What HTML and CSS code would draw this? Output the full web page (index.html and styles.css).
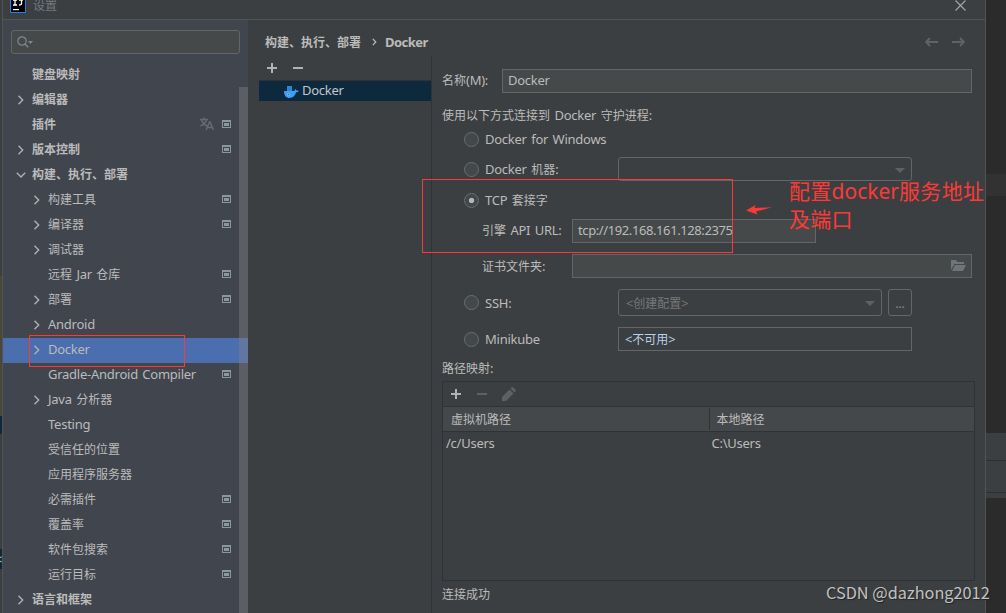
FILE: index.html
```html
<!DOCTYPE html>
<html lang="zh-CN">
<head>
<meta charset="utf-8">
<title>设置</title>
<link rel="stylesheet" href="styles.css">
</head>
<body>
<svg class="defs" width="0" height="0">
  <symbol id="right" viewBox="0 0 10 10"><path d="M2.5 .8 6.7 5 2.5 9.2" fill="none" stroke="#aeb0b3" stroke-width="1.4"/></symbol>
  <symbol id="down" viewBox="0 0 10 10"><path d="M.8 2.8 5 7 9.2 2.8" fill="none" stroke="#aeb0b3" stroke-width="1.4"/></symbol>
  <symbol id="proj" viewBox="0 0 9 8"><path d="M0 0h9v8H0zM1 2v5h7V2z" fill="#8b979f" fill-rule="evenodd"/><path d="M2 3h5v3H2z" fill="#8b979f"/></symbol>
  <symbol id="plus" viewBox="0 0 10 10"><path d="M4 0h2v4h4v2H6v4H4V6H0V4h4z" fill="currentColor"/></symbol>
  <symbol id="minus" viewBox="0 0 10 10"><path d="M0 4h10v2H0z" fill="currentColor"/></symbol>
</svg>
<div class="screen">
  <div class="behind-left"><i class="olive"></i><i class="sel"></i><i class="sel two">&lt;</i></div>
  <div class="window">
    <header class="titlebar">
      <svg class="logo" width="16" height="16" viewBox="0 0 16 16"><path d="M.5 .5h15v15H.5z" fill="#000" stroke="#1d7ff2"/><path d="M3 3h4M5 3v5M3 8h4M9 3h4M11.500 3v3.500q0 1.500-2.500 1.500" fill="none" stroke="#fff" stroke-width="1.300"/><path d="M3 12h6v1.200H3z" fill="#fff"/></svg>
      <span class="zh">设置</span>
      <svg class="close" width="11" height="11" viewBox="0 0 11 11"><path d="M.5.5l10 10M10.500.5l-10 10" stroke="#a4a6a7" stroke-width="1.100"/></svg>
    </header>
    <div class="body">
      <aside class="sidebar">
        <div class="search"><svg width="17" height="12" viewBox="0 0 17 12"><circle cx="5" cy="5" r="4.200" fill="none" stroke="#80878a" stroke-width="1.200"/><path d="M8 8l3.300 3.300" stroke="#80878a" stroke-width="1.400"/><path d="M11 5h5l-2.500 3z" fill="#80878a"/></svg></div>
        <ul class="tree">
          <li class="top"><span class="zh">键盘映射</span></li>
          <li class="top"><svg class="chev"><use href="#right"/></svg><span class="zh">编辑器</span></li>
          <li class="top"><span class="zh">插件</span><svg class="lang" width="14" height="14" viewBox="0 0 14 14"><path d="M0 2.500h8M4 .5v2M1.500 2.500C2.500 6 5 8 7 9M6.500 2.500C5.500 6 3 8 .5 9M6.200 13l3.300-8h.6l3.300 8M7.500 10.500h4.600" fill="none" stroke="#646b74" stroke-width="1.500"/></svg><svg class="badge"><use href="#proj"/></svg></li>
          <li class="top"><svg class="chev"><use href="#right"/></svg><span class="zh">版本控制</span><svg class="badge"><use href="#proj"/></svg></li>
          <li class="top"><svg class="chev"><use href="#down"/></svg><span class="zh">构建、执行、部署</span></li>
          <li><svg class="chev"><use href="#right"/></svg><span class="zh">构建工具</span><svg class="badge"><use href="#proj"/></svg></li>
          <li><svg class="chev"><use href="#right"/></svg><span class="zh">编译器</span><svg class="badge"><use href="#proj"/></svg></li>
          <li><svg class="chev"><use href="#right"/></svg><span class="zh">调试器</span></li>
          <li><span><b class="zh">远程</b> Jar <b class="zh">仓库</b></span><svg class="badge"><use href="#proj"/></svg></li>
          <li><svg class="chev"><use href="#right"/></svg><span class="zh">部署</span><svg class="badge"><use href="#proj"/></svg></li>
          <li><svg class="chev"><use href="#right"/></svg><span>Android</span></li>
          <li class="active"><svg class="chev"><use href="#right"/></svg><span>Docker</span></li>
          <li><span>Gradle-Android Compiler</span><svg class="badge"><use href="#proj"/></svg></li>
          <li><svg class="chev"><use href="#right"/></svg><span>Java <b class="zh">分析器</b></span></li>
          <li><span>Testing</span></li>
          <li><span class="zh">受信任的位置</span></li>
          <li><span class="zh">应用程序服务器</span></li>
          <li><span class="zh">必需插件</span><svg class="badge"><use href="#proj"/></svg></li>
          <li><span class="zh">覆盖率</span><svg class="badge"><use href="#proj"/></svg></li>
          <li><span class="zh">软件包搜索</span><svg class="badge"><use href="#proj"/></svg></li>
          <li><span class="zh">运行目标</span><svg class="badge"><use href="#proj"/></svg></li>
          <li class="top"><svg class="chev"><use href="#right"/></svg><span class="zh">语言和框架</span></li>
        </ul>
        <div class="scrollbar"></div>
      </aside>
      <main class="main">
        <div class="crumbs">
          <span class="zh">构建、执行、部署</span>
          <svg width="5" height="8" viewBox="0 0 5 8"><path d="M.8.8 3.800 4 .8 7.200" fill="none" stroke="#bbb" stroke-width="1.200"/></svg>
          <span class="current">Docker</span>
          <svg class="nav" width="40" height="10" viewBox="0 0 40 10"><path d="M13 5H1M5 1 1 5l4 4M27 5h12M35 1l4 4-4 4" fill="none" stroke="#606364" stroke-width="1.900"/></svg>
        </div>
        <div class="split">
          <section class="servers">
            <div class="tools"><svg width="10" height="10"><use href="#plus"/></svg><svg width="10" height="10"><use href="#minus"/></svg></div>
            <div class="server"><svg width="15" height="12" viewBox="0 0 15 12"><path d="M3 0h5v5H3z" fill="#2b87cf"/><path d="M0 5h10.500c.5-.6.4-1.400.8-2 .8.400 1 1 1.100 1.600 1-.1 1.600 0 2.400.4-.5.900-1.500 1.200-2.700 1.300C11 10 9 12 5.500 12 2 12 0 9.500 0 5z" fill="#3b9ff3"/><circle cx="4.500" cy="8.500" r="1.200" fill="#2678b8" stroke="#9bd0fa" stroke-width=".7"/></svg><span>Docker</span></div>
          </section>
          <section class="form">
            <div class="row name"><label><b class="zh">名称</b>(M):</label><div class="field">Docker</div></div>
            <div class="row hint"><span><b class="zh">使用以下方式连接到</b> Docker <b class="zh">守护进程</b>:</span></div>
            <div class="row opt first"><i class="radio"></i><span>Docker for Windows</span></div>
            <div class="row opt machine"><i class="radio"></i><span class="lead">Docker <b class="zh">机器</b>:</span><div class="combo"><i class="caret"></i></div></div>
            <div class="row opt tcp"><i class="radio on"></i><span>TCP <b class="zh">套接字</b></span></div>
            <div class="row sub url"><label><b class="zh">引擎</b> API URL:</label><div class="field">tcp://192.168.161.128:2375</div></div>
            <div class="row sub cert"><label><b class="zh">证书文件夹</b>:</label><div class="field"><svg width="15" height="12" viewBox="0 0 15 12"><path d="M0 0h5l1.500 2H13v2H3.500L0 10z" fill="#6e7477"/><path d="M4 5h11l-3 6H1z" fill="#6e7477"/></svg></div></div>
            <div class="row opt ssh"><i class="radio"></i><span class="lead">SSH:</span><div class="combo">&lt;<b class="zh">创建配置</b>&gt;<i class="caret"></i></div><div class="more">...</div></div>
            <div class="row opt mini"><i class="radio"></i><span class="lead">Minikube</span><div class="field plain">&lt;<b class="zh">不可用</b>&gt;</div></div>
            <div class="row maplabel"><span><b class="zh">路径映射</b>:</span></div>
            <div class="table">
              <div class="tools"><svg width="10" height="10"><use href="#plus"/></svg><svg class="off" width="10" height="10"><use href="#minus"/></svg><svg class="off pen" width="14" height="14" viewBox="0 0 14 14"><path d="M0 14v-4l7.500-7.500 4 4L4 14zM8.500 1.500 9.700.3q.6-.5 1.200 0l2.800 2.800q.5.600 0 1.200l-1.200 1.200z" fill="currentColor"/></svg></div>
              <div class="thead"><div class="zh">虚拟机路径</div><div class="zh">本地路径</div></div>
              <div class="tr"><div>/c/Users</div><div>C:\Users</div></div>
            </div>
            <div class="row status"><span class="zh">连接成功</span></div>
          </section>
        </div>
      </main>
    </div>
  </div>
  <div class="behind-right"><i class="band"></i><i class="panel"></i></div>
  <div class="mark docker-item"></div>
  <div class="mark tcp-area"></div>
  <svg class="arrow" width="26" height="10" viewBox="0 0 26 10"><path d="M0 5.500 9.500 0 8.500 3 26 2.300 10 6.500l1.500 3z" fill="#fb3a37"/></svg>
  <div class="note"><b class="zh">配置</b>docker<b class="zh">服务地址</b><br><b class="zh">及端口</b></div>
  <div class="watermark">CSDN @dazhong2012</div>
</div>
</body>
</html>
```
FILE: styles.css
```css
* { box-sizing: border-box; }
body {
  margin: 0;
  background: #2b2b2b;
  color: #bbbbbb;
  font: 13px/20px "Noto Sans", "Noto Sans CJK SC", sans-serif;
  letter-spacing: -.25px;
  word-spacing: 1.3px;
}
i { font-style: normal; }
b { font-weight: inherit; }
svg { display: block; flex: none; }
.defs { position: absolute; }
.zh { font-size: 12px; font-family: "Noto Sans CJK SC", sans-serif; letter-spacing: 0; }
.screen { position: relative; display: flex; width: 1006px; height: 613px; overflow: hidden; white-space: nowrap; }

.behind-left { width: 2px; background: #3c3f41; display: flex; flex-direction: column; overflow: hidden; }
.behind-left .olive { margin-top: 276px; height: 140px; background: #4b4739; }
.behind-left .sel { height: 18px; background: #0d293e; }
.behind-left .two { margin-top: 115px; height: 20px; text-indent: -5px; }
.window { width: 984px; display: flex; flex-direction: column; background: #3c3f41; border-left: 1px solid #515455; border-right: 1px solid #515455; }
.behind-right { width: 20px; background: #2b2b2b; display: flex; flex-direction: column; }
.behind-right .band { margin-top: 174px; height: 22px; background: #323232; }
.behind-right .panel {
  margin-top: 237px; height: 65px;
  background: linear-gradient(#3c3f41 27px, #2d2f30 27px 28px, #3c3f41 28px 59px, #2d2f30 59px 60px, #3c3f41 60px);
}

.titlebar { height: 20px; flex: none; display: flex; border-bottom: 1px solid #515455; padding-left: 7px; color: #777a7c; }
.logo { margin-top: -3px; }
.titlebar .zh { line-height: 10px; margin-left: 7px; }
.close { margin: 0 19px 0 auto; }
.body { flex: 1; display: flex; min-height: 0; }

.sidebar { position: relative; width: 245px; background: #41454e; padding-top: 10px; overflow: hidden; }
.search { width: 229px; height: 24px; margin-left: 8px; border: 1px solid #646566; border-radius: 3px; background: #45494a; padding: 5px; }
.tree { list-style: none; margin: 9px 0 0; padding: 0; }
.tree li { height: 25px; padding: 0 17px 3px 45px; display: flex; align-items: center; }
.tree .top { padding-left: 29px; font-weight: 700; }
.tree .active { background: #4b6eaf; }
.chev { width: 10px; height: 10px; margin: 1px 6px 0 -16px; }
.badge { width: 9px; height: 8px; margin-left: auto; margin-top: -1px; }
.lang { margin-left: auto; margin-right: 8px; }
.lang + .badge { margin-left: 0; }
.scrollbar { position: absolute; right: 0; top: 67px; width: 9px; height: 540px; background: rgba(133, 133, 138, .4); }

.main { flex: 1; display: flex; flex-direction: column; min-width: 0; }
.crumbs { height: 36px; padding: 8px 20px 0 17px; display: flex; align-items: center; font-weight: 700; }
.crumbs svg { margin: 0 8px 0 11px; }
.crumbs .nav { margin: 0 0 0 auto; }
.current { letter-spacing: -.55px; }
.split { flex: 1; display: flex; min-height: 0; }
.servers { width: 184px; padding-left: 11px; border-right: 1px solid #303334; }
.tools { display: flex; gap: 16px; align-items: center; color: #b0b2b3; height: 24px; padding-left: 8px; }
.server { height: 21px; border-top: 1px solid #323232; background: #0d293e; display: flex; align-items: center; padding-left: 25px; gap: 3px; color: #c4c6c7; }
.server svg { margin-top: 2px; }
.server span { padding-bottom: 2px; }

.form { flex: 1; padding: 13px 0 0 10px; }
.row { display: flex; align-items: center; height: 24px; }
.field, .combo, .more { height: 100%; border: 1px solid #646566; background: #45494a; display: flex; align-items: center; padding-left: 5px; }
.field { padding-bottom: 1px; }
.name label { width: 60px; padding-bottom: 2px; }
.name .field, .url .field { padding-bottom: 3px; }
.name .field { width: 470px; }
.hint { margin-top: 12px; height: 20px; }
.opt { padding-left: 22px; }
.radio { width: 15px; height: 15px; border: 1px solid #6b6d6e; border-radius: 50%; background: #43494a; margin-right: 6px; flex: none; }
.radio.on { background: radial-gradient(circle, #b4b6b7 0 2.3px, #43494a 3px); }
.lead { width: 133px; }
.combo { width: 294px; border-radius: 3px; background: #3c3f41; color: #777; padding-left: 7px; }
.caret { margin: 2px 6px 0 auto; border: 5px solid transparent; border-top-color: #5e6162; border-bottom: 0; }
.first { margin-top: 2px; }
.first span { padding-bottom: 1px; }
.machine { margin-top: 6px; }
.tcp { margin-top: 7px; }
.sub { padding-left: 40px; }
.sub label { width: 90px; }
.url { margin-top: 7px; }
.url label { padding-bottom: 2px; }
.url .field { width: 244px; letter-spacing: -.4px; }
.cert { margin-top: 11px; }
.cert .field { width: 400px; justify-content: flex-end; padding-right: 5px; }
.ssh { margin-top: 11px; height: 27px; }
.ssh .combo { width: 264px; }
.more { width: 24px; margin-left: 6px; border-radius: 3px; background: #3c3f41; color: #888; padding: 0; justify-content: center; }
.mini { margin-top: 11px; }
.mini .lead { padding-bottom: 1px; }
.plain { width: 294px; background: #3c3f41; color: #bbd0e8; padding-left: 6px; }
.maplabel { margin-top: 7px; height: 20px; }
.table { width: 533px; height: 200px; margin-top: 3px; border: 1px solid #303233; }
.table .tools { border-bottom: 1px solid #303233; height: 25px; }
.off { color: #5e6061; }
.pen { margin-left: -1px; }
.thead { display: flex; height: 25px; align-items: center; background: #45484a; border-bottom: 1px solid #303233; }
.thead div { width: 266px; padding-left: 8px; }
.thead div + div { border-left: 1px solid #303233; height: 22px; line-height: 22px; padding-left: 7px; }
.tr { display: flex; padding-top: 1px; }
.tr div { width: 266px; padding-left: 3px; }
.status { margin-top: 3px; height: 20px; }

.mark { position: absolute; border: 1px solid #fb3a37; }
.docker-item { left: 29px; top: 335px; width: 156px; height: 32px; }
.tcp-area { left: 422px; top: 179px; width: 311px; height: 74px; }
.arrow { position: absolute; left: 746px; top: 205px; }
.note { position: absolute; left: 789px; top: 177px; color: #fb3a37; font-size: 21px; line-height: 28px; letter-spacing: 0; }
.note .zh { font-size: 21px; line-height: 20px; letter-spacing: .3px; }
.watermark { position: absolute; left: 826px; top: 582px; font: 16.3px/20px "Noto Sans CJK SC", sans-serif; letter-spacing: 0; word-spacing: 0; color: #c0c1c2; text-shadow: 1px 1px 1px #222; }
```
